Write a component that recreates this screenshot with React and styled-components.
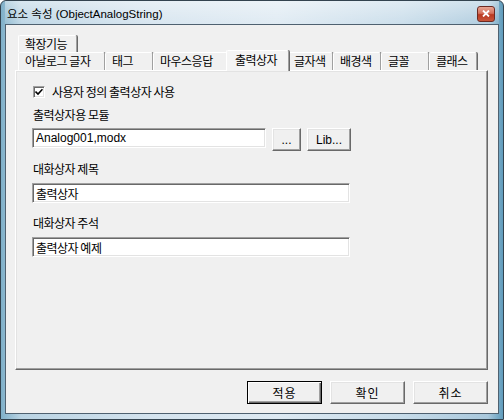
import React from 'react';
import styled, { createGlobalStyle, css } from 'styled-components';

const GlobalStyle = createGlobalStyle`
  html, body {
    margin: 0;
    padding: 0;
    background: #fff;
  }
  body {
    font-family: "Noto Sans CJK KR", "Liberation Sans", sans-serif;
    font-size: 12px;
  }
`;

const raised = css`
  border-top: 1px solid #ffffff;
  border-left: 1px solid #ffffff;
  border-right: 1px solid #696969;
  border-bottom: 1px solid #696969;
  box-shadow: inset -1px -1px 0 #a0a0a0, inset 1px 1px 0 #e3e3e3;
`;

const sunken = css`
  border-top: 1px solid #a0a0a0;
  border-left: 1px solid #a0a0a0;
  border-right: 1px solid #ffffff;
  border-bottom: 1px solid #ffffff;
  box-shadow: inset 1px 1px 0 #696969, inset -1px -1px 0 #e3e3e3;
`;

const Window = styled.div`
  box-sizing: border-box;
  width: 504px;
  height: 420px;
  border: 1px solid #33434f;
  border-radius: 6px 6px 0 0;
  padding: 0 4px 5px 4px;
  display: flex;
  flex-direction: column;
  background: linear-gradient(to right, #7fb0c9 0%, #b9d3e3 4%, #d4e3ee 30%, #dde9f2 55%, #c6dbe9 80%, #a9c8dc 97%, #5f9bbb 100%);
`;

const TitleBar = styled.div`
  height: 23px;
  display: flex;
  align-items: center;
  justify-content: space-between;
  padding: 0 2px 0 2px;
  background: linear-gradient(to bottom, rgba(255,255,255,0.45), rgba(255,255,255,0.1));
`;

const Title = styled.span`
  font-family: "Liberation Sans", "Noto Sans CJK KR", sans-serif;
  font-size: 11.5px;
  line-height: 14px;
  color: #000;
  margin-top: 2px;
`;

const CloseButton = styled.div`
  width: 16px;
  height: 14px;
  margin-top: 2px;
  margin-right: 2px;
  border: 1px solid #6d2a22;
  border-radius: 3px;
  background: linear-gradient(to bottom, #e8a593 0%, #d4715c 45%, #b9381f 55%, #c8563b 100%);
  display: flex;
  align-items: center;
  justify-content: center;
`;

const Client = styled.div`
  flex: 1;
  border: 1px solid #4f6170;
  background: #f0f0f0;
  display: flex;
  flex-direction: column;
  padding: 10px 10px 9px 9px;
`;

const TabControl = styled.div`
  height: 335px;
  display: flex;
  flex-direction: column;
`;

const TabRow = styled.div`
  display: flex;
  padding-left: 3px;
  height: ${p => p.$h}px;
`;

const Tab = styled.div`
  box-sizing: border-box;
  width: ${p => p.$w}px;
  height: 100%;
  padding-left: 6px;
  border-left: 1px solid #ffffff;
  border-top: 1px solid #ffffff;
  border-right: 1px solid #a0a0a0;
  box-shadow: 1px 0 0 #696969;
  border-radius: 2px 2px 0 0;
  font-size: 12px;
  letter-spacing: -0.5px;
  line-height: 16px;
  color: #000;
  white-space: nowrap;
  background: #f0f0f0;
  ${p => p.$active && css`
    position: relative;
    z-index: 1;
    width: ${p.$w + 4}px;
    height: calc(100% + 3px);
    margin: -2px -2px -1px -2px;
    padding-left: 8px;
    line-height: 17px;
    background: #f4f4f4;
  `}
`;

const Panel = styled.div`
  flex: 1;
  ${raised};
  padding: 14px 16px 0 16px;
  display: flex;
  flex-direction: column;
`;

const CheckRow = styled.label`
  display: flex;
  align-items: center;
  gap: 7px;
  height: 14px;
  margin-left: 1px;
  font-size: 12px;
  letter-spacing: -0.5px;
  line-height: 14px;
`;

const CheckBox = styled.span`
  box-sizing: border-box;
  width: 12px;
  height: 12px;
  background: #fff;
  ${sunken};
  display: flex;
  align-items: center;
  justify-content: center;
`;

const FieldLabel = styled.div`
  margin-top: ${p => p.$mt}px;
  margin-left: 1px;
  font-size: 12px;
  letter-spacing: -0.5px;
  line-height: 14px;
  color: #000;
`;

const FieldRow = styled.div`
  display: flex;
  align-items: flex-start;
  gap: ${p => p.$gap || 0}px;
  margin-top: ${p => p.$mt}px;
`;

const TextBox = styled.div`
  box-sizing: border-box;
  width: ${p => p.$w}px;
  height: 20px;
  background: #fff;
  ${sunken};
  padding: 2px 3px 0 3px;
  font-family: ${p => p.$latin ? '"Liberation Sans", "Noto Sans CJK KR", sans-serif' : '"Noto Sans CJK KR", sans-serif'};
  font-size: 12px;
  letter-spacing: ${p => p.$latin ? '0' : '-0.5px'};
  line-height: 15px;
  color: #000;
  white-space: nowrap;
`;

const SmallButton = styled.div`
  box-sizing: border-box;
  width: ${p => p.$w}px;
  height: 23px;
  margin-left: ${p => p.$ml}px;
  background: #f0f0f0;
  ${raised};
  display: flex;
  align-items: center;
  justify-content: center;
  font-family: "Liberation Sans", sans-serif;
  font-size: 12px;
  color: #000;
`;

const ButtonBar = styled.div`
  display: flex;
  justify-content: flex-end;
  gap: 8px;
  margin-top: 11px;
  padding-right: 0;
`;

const DialogButton = styled.div`
  box-sizing: border-box;
  width: 75px;
  height: 23px;
  background: #f0f0f0;
  display: flex;
  align-items: center;
  justify-content: center;
  font-size: 12px;
  letter-spacing: 1px;
  color: #000;
  ${raised};
  ${p => p.$default && css`
    border: 1px solid #000;
    box-shadow: inset 1px 1px 0 #ffffff, inset -1px -1px 0 #696969, inset -2px -2px 0 #a0a0a0;
  `}
`;

const bottomTabs = [
  { label: '아날로그 글자', w: 87 },
  { label: '태그', w: 48 },
  { label: '마우스응답', w: 75 },
  { label: '출력상자', w: 59, active: true },
  { label: '글자색', w: 46 },
  { label: '배경색', w: 48 },
  { label: '글꼴', w: 48 },
  { label: '클래스', w: 48 },
];

export default function App() {
  return (
    <>
      <GlobalStyle />
      <Window>
        <TitleBar>
          <Title>요소 속성 (ObjectAnalogString)</Title>
          <CloseButton>
            <svg width="8" height="7" viewBox="0 0 8 7">
              <path d="M1 0.5 L7 6.5 M7 0.5 L1 6.5" stroke="#fff" strokeWidth="1.8" />
            </svg>
          </CloseButton>
        </TitleBar>
        <Client>
          <TabControl>
            <TabRow $h={17}>
              <Tab $w={59}>확장기능</Tab>
            </TabRow>
            <TabRow $h={18}>
              {bottomTabs.map(t => (
                <Tab key={t.label} $w={t.w} $active={t.active}>{t.label}</Tab>
              ))}
            </TabRow>
            <Panel>
              <CheckRow>
                <CheckBox>
                  <svg width="8" height="8" viewBox="0 0 8 8">
                    <path d="M0.5 3.5 L3 6 L7.5 1.2" stroke="#000" strokeWidth="1.6" fill="none" />
                  </svg>
                </CheckBox>
                사용자 정의 출력상자 사용
              </CheckRow>
              <FieldLabel $mt={9}>출력상자용 모듈</FieldLabel>
              <FieldRow $mt={6}>
                <TextBox $w={234} $latin>Analog001,modx</TextBox>
                <SmallButton $w={29} $ml={6}>...</SmallButton>
                <SmallButton $w={44} $ml={6}>Lib...</SmallButton>
              </FieldRow>
              <FieldLabel $mt={11}>대화상자 제목</FieldLabel>
              <FieldRow $mt={7}>
                <TextBox $w={318}>출력상자</TextBox>
              </FieldRow>
              <FieldLabel $mt={13}>대화상자 주석</FieldLabel>
              <FieldRow $mt={7}>
                <TextBox $w={318}>출력상자 예제</TextBox>
              </FieldRow>
            </Panel>
          </TabControl>
          <ButtonBar>
            <DialogButton $default>적용</DialogButton>
            <DialogButton>확인</DialogButton>
            <DialogButton>취소</DialogButton>
          </ButtonBar>
        </Client>
      </Window>
    </>
  );
}
